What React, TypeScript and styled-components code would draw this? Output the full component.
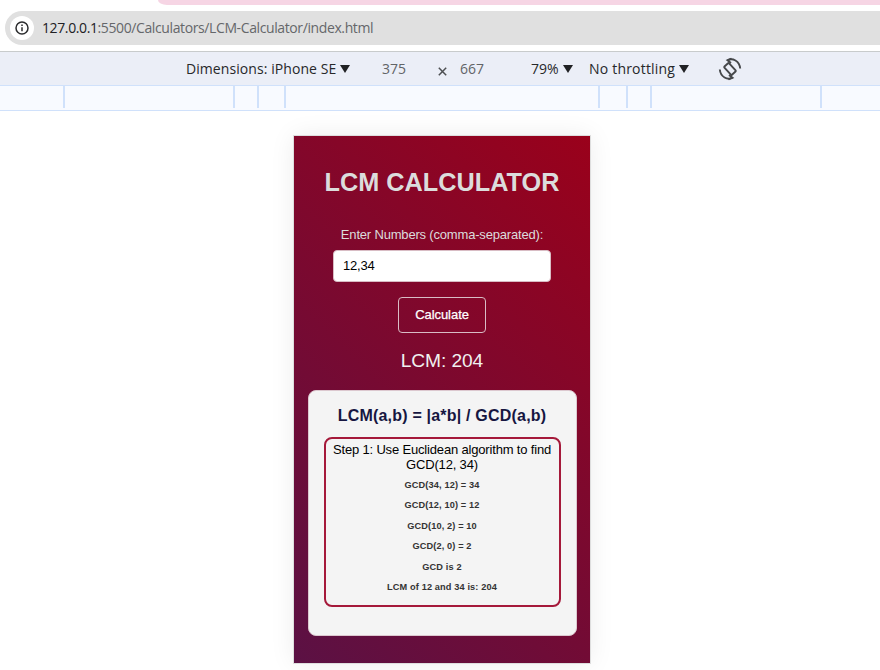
import React from "react";
import styled, { createGlobalStyle } from "styled-components";

const GlobalStyle = createGlobalStyle`
  * { box-sizing: border-box; }
  body { margin: 0; background: #fff; overflow: hidden; }
`;

const Window = styled.div`
  width: 880px;
  height: 670px;
  display: flex;
  flex-direction: column;
  background: #fff;
  overflow: hidden;
  font-family: "Open Sans", "Noto Sans", sans-serif;
`;

const TabStrip = styled.div`
  height: 5px;
  flex: none;
  margin-left: 158px;
  background: #f6d5e4;
  border-bottom-left-radius: 9px 5px;
`;

const AddressRow = styled.div`
  height: 47px;
  flex: none;
  padding: 6px 0 0 5px;
  border-bottom: 1px solid #c8cbcc;
`;

const AddressBar = styled.div`
  height: 34px;
  display: flex;
  align-items: center;
  gap: 8px;
  padding-left: 5px;
  border-radius: 17px 0 0 17px;
  background: #e0e0e0;
`;

const SiteInfo = styled.div`
  width: 24px;
  height: 24px;
  display: grid;
  place-items: center;
  border-radius: 50%;
  background: #fff;
`;

const Url = styled.span`
  font-size: 14px;
  line-height: 20px;
  letter-spacing: -0.39px;
  color: #65676a;
  white-space: nowrap;
`;

const Host = styled.span`
  color: #202124;
`;

const DeviceToolbar = styled.div`
  height: 34px;
  flex: none;
  display: flex;
  align-items: center;
  padding: 0 0 0 186px;
  background: #ebeef7;
  border-bottom: 1px solid #d0e1fb;
  color: #27282a;
`;

const ToolItem = styled.div<{ $width: number; $muted?: boolean; $spacing?: number }>`
  width: ${(p) => p.$width}px;
  flex: none;
  display: flex;
  align-items: center;
  gap: 4px;
  font-size: 14px;
  line-height: 20px;
  letter-spacing: ${(p) => p.$spacing ?? 0}px;
  white-space: nowrap;
  color: ${(p) => (p.$muted ? "#626467" : "#27282a")};
`;

const Ruler = styled.div`
  height: 25px;
  flex: none;
  display: flex;
  background: #f8faff;
  border-bottom: 1px solid #d0e1fb;
`;

const Segment = styled.div<{ $width: number }>`
  width: ${(p) => p.$width}px;
  height: 22px;
  flex: none;
  border-right: 2px solid #d0e1fb;
`;

const Stage = styled.div`
  flex: 1;
  padding: 25px 0 0 294px;
`;

const Phone = styled.main`
  width: 296px;
  height: 527px;
  display: flex;
  flex-direction: column;
  align-items: center;
  font-family: "Liberation Sans", Arial, sans-serif;
  background: linear-gradient(45deg, #5b1144, #9a011b);
  box-shadow: 0 0 0 1px #dedede, 0 0 24px rgba(0, 0, 0, 0.08);
`;

const Title = styled.h1`
  margin: 31px 0 0;
  font-size: 25.28px;
  line-height: 30px;
  white-space: nowrap;
  color: #dcdcdc;
`;

const Label = styled.label`
  margin-top: 30px;
  font-size: 13px;
  line-height: 16px;
  letter-spacing: -0.18px;
  white-space: nowrap;
  color: #dcdcdc;
`;

const NumberInput = styled.input`
  width: 218px;
  height: 32px;
  margin-top: 7px;
  padding: 0 9px 1px;
  border: 1px solid #d8bcc4;
  border-radius: 4px;
  background: #fff;
  font: 13px "Liberation Sans", Arial, sans-serif;
  letter-spacing: -0.2px;
  color: #000;
  outline: none;
`;

const CalculateButton = styled.button`
  width: 88px;
  height: 36px;
  margin-top: 15px;
  padding: 0 0 1px;
  border: 1px solid #d9bcc5;
  border-radius: 4px;
  background: transparent;
  font: 13px "Liberation Sans", Arial, sans-serif;
  letter-spacing: -0.05px;
  -webkit-text-stroke: 0.25px #fff;
  color: #fff;
`;

const Result = styled.div`
  margin-top: 17px;
  font-size: 19.2px;
  line-height: 22px;
  letter-spacing: -0.1px;
  color: #f0f0f0;
`;

const Card = styled.section`
  width: 269px;
  height: 246px;
  margin-top: 18px;
  display: flex;
  flex-direction: column;
  align-items: center;
  border: 1px solid #dcc8cf;
  border-radius: 8px;
  background: #f4f4f4;
`;

const Formula = styled.h2`
  margin: 15px 0 0;
  font-size: 16px;
  line-height: 19px;
  letter-spacing: 0.2px;
  white-space: nowrap;
  color: #161641;
`;

const Steps = styled.div`
  width: 237px;
  height: 170px;
  margin-top: 12px;
  padding-top: 3px;
  border: 2px solid #a5193a;
  border-radius: 8px;
  text-align: center;
`;

const StepTitle = styled.p`
  margin: 0 0 2.6px;
  font-size: 13px;
  line-height: 15px;
  letter-spacing: -0.17px;
  color: #000;
`;

const StepLine = styled.p`
  margin: 0;
  font-size: 9.2px;
  font-weight: 700;
  line-height: 20.5px;
  letter-spacing: 0.13px;
  color: #333;
`;

const Caret = () => (
  <svg width="10" height="8" viewBox="0 0 10 8">
    <path d="M0 0h10L5 8z" fill="#202124" />
  </svg>
);

const InfoIcon = () => (
  <svg width="14" height="14" viewBox="0 0 14 14">
    <circle cx="7" cy="7" r="6" fill="none" stroke="#2b2c2e" strokeWidth="1.5" />
    <path d="M7 6.2v4M7 3.5v1.6" stroke="#2b2c2e" strokeWidth="1.5" />
  </svg>
);

const RotateIcon = () => (
  <svg width="24" height="24" viewBox="0 0 24 24" fill="none" stroke="#45474a" strokeWidth="1.9">
    <rect x="8.8" y="6.4" width="6.4" height="11.2" rx="0.8" transform="rotate(-42 12 12)" />
    <path d="M9.5 3.3C14.5.5 21.5 4 22.2 11.5M14.5 20.7C9.5 23.5 2.5 20 1.8 12.5" />
    <path d="M13.5 1.500 9.500 3.300l3.500 2.700M10.500 22.500l4-1.800-3.500-2.700" />
  </svg>
);

const CrossIcon = () => (
  <svg width="9" height="9" viewBox="0 0 9 9">
    <path d="m.8.8 7.4 7.4M8.2.8.8 8.2" stroke="#4d4f52" strokeWidth="1.5" />
  </svg>
);

const CrossSlot = styled.div`
  width: 22px;
  display: flex;
  padding-top: 5px;
`;

const ticks = [65, 170, 24, 27, 314, 28, 24, 170];
const lines = [
  "GCD(34, 12) = 34",
  "GCD(12, 10) = 12",
  "GCD(10, 2) = 10",
  "GCD(2, 0) = 2",
  "GCD is 2",
  "LCM of 12 and 34 is: 204",
];

export default function App() {
  return (
    <Window>
      <GlobalStyle />
      <TabStrip />
      <AddressRow>
        <AddressBar>
          <SiteInfo><InfoIcon /></SiteInfo>
          <Url><Host>127.0.0.1</Host>:5500/Calculators/LCM-Calculator/index.html</Url>
        </AddressBar>
      </AddressRow>
      <DeviceToolbar>
        <ToolItem $width={196} $spacing={0.07}>Dimensions: iPhone SE <Caret /></ToolItem>
        <ToolItem $width={56} $muted>375</ToolItem>
        <CrossSlot><CrossIcon /></CrossSlot>
        <ToolItem $width={71} $muted>667</ToolItem>
        <ToolItem $width={58}>79% <Caret /></ToolItem>
        <ToolItem $width={129} $spacing={0.2}>No throttling <Caret /></ToolItem>
        <RotateIcon />
      </DeviceToolbar>
      <Ruler>{ticks.map((w, i) => <Segment key={i} $width={w} />)}</Ruler>
      <Stage>
        <Phone>
          <Title>LCM CALCULATOR</Title>
          <Label htmlFor="numbers">Enter Numbers (comma-separated):</Label>
          <NumberInput id="numbers" defaultValue="12,34" />
          <CalculateButton>Calculate</CalculateButton>
          <Result>LCM: 204</Result>
          <Card>
            <Formula>LCM(a,b) = |a*b| / GCD(a,b)</Formula>
            <Steps>
              <StepTitle>Step 1: Use Euclidean algorithm to find GCD(12, 34)</StepTitle>
              {lines.map((l) => <StepLine key={l}>{l}</StepLine>)}
            </Steps>
          </Card>
        </Phone>
      </Stage>
    </Window>
  );
}
